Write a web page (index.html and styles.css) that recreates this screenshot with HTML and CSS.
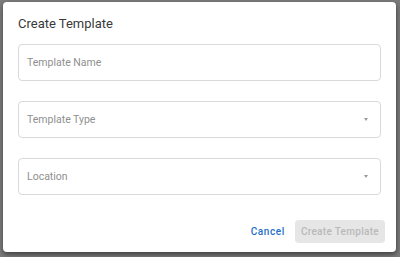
FILE: index.html
```html
<!DOCTYPE html>
<html lang="en">
<head>
  <meta charset="UTF-8" />
  <meta name="viewport" content="width=device-width, initial-scale=1.0" />
  <title>Create Template</title>
  <link rel="stylesheet" href="styles.css">
</head>
<body>
  <div class="backdrop">
    <div class="dialog">
      <h2 class="dialog-title">Create Template</h2>
      <div class="dialog-body">
        <div class="field">
          <span class="field-label">Template Name</span>
        </div>
        <div class="field select">
          <span class="field-label">Template Type</span>
          <span class="caret"></span>
        </div>
        <div class="field select">
          <span class="field-label">Location</span>
          <span class="caret"></span>
        </div>
      </div>
      <div class="dialog-actions">
        <button class="btn btn-text">Cancel</button>
        <button class="btn btn-filled" disabled>Create Template</button>
      </div>
    </div>
  </div>
</body>
</html>
```

FILE: styles.css
```css
* {
  margin: 0;
  padding: 0;
  box-sizing: border-box;
}
body {
  font-family: Roboto, "Noto Sans", sans-serif;
  background-color: #7b7b7b;
  width: 400px;
  height: 257px;
  overflow: hidden;
}
.backdrop {
  padding: 2px 4px 0 3px;
}
/* Dialog */
.dialog {
  background-color: #fff;
  border-radius: 4px;
  height: 250px;
  box-shadow: 0 2px 4px rgba(0, 0, 0, 0.35), 1px 3px 6px rgba(0, 0, 0, 0.2);
  padding: 14px 15px 0 15px;
  display: flex;
  flex-direction: column;
}
.dialog-title {
  font-size: 13px;
  font-weight: 400;
  color: #3a3a3a;
  line-height: 16px;
  height: 28px;
}
.dialog-body {
  display: flex;
  flex-direction: column;
  gap: 20px;
}
.field {
  height: 37px;
  border: 1px solid #d9d9d9;
  border-radius: 4px;
  display: flex;
  align-items: center;
  padding: 0 9px 0 8px;
}
.field-label {
  font-size: 10.5px;
  color: #8f8f8f;
  flex-grow: 1;
}
.caret {
  width: 0;
  height: 0;
  border-left: 2.5px solid transparent;
  border-right: 2.5px solid transparent;
  border-top: 3px solid #999;
  margin-right: 3px;
}
/* Actions */
.dialog-actions {
  display: flex;
  justify-content: flex-end;
  align-items: center;
  gap: 4px;
  margin-top: 25px;
  margin-right: -4px;
}
.btn {
  font-family: Roboto, "Noto Sans", sans-serif;
  font-size: 10px;
  font-weight: 500;
  letter-spacing: 0.3px;
  border: none;
  border-radius: 4px;
  height: 23px;
  padding: 0 6px;
  background: none;
}
.btn-text {
  color: #1f6fc7;
  letter-spacing: 0.6px;
}
.btn-filled {
  background-color: #e6e6e6;
  color: #b9b9b9;
}
```
